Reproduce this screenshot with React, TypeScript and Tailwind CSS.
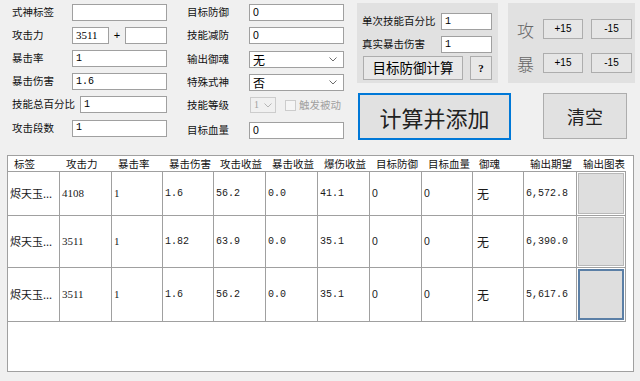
import React from "react";

const CJK = "font-['Noto_Sans_CJK_SC','Noto_Sans',sans-serif]";

function TextBox({ value = "", w, mono = false, serif = false }: { value?: string; w: string; mono?: boolean; serif?: boolean }) {
  const font = mono ? "font-['Liberation_Mono',monospace] text-[10px]" : serif ? "font-['Liberation_Serif',serif] text-[11px]" : "font-['Liberation_Sans',sans-serif] text-[10.5px]";
  return (
    <div className={`${w} h-[17px] border border-[#a0a0a0] bg-white pl-[3px] flex items-center text-black leading-none ${font}`}>
      {value}
    </div>
  );
}

function Chevron({ color = "#6d6d6d" }: { color?: string }) {
  return (
    <svg width="8" height="5" viewBox="0 0 8 5" className="shrink-0">
      <path d="M0.5 0.5 L4 4 L7.5 0.5" fill="none" stroke={color} strokeWidth="1" />
    </svg>
  );
}

function Select({ value }: { value: string }) {
  return (
    <div className="w-[95px] h-[17px] border border-[#a0a0a0] bg-white pl-[3px] pr-[6px] flex items-center justify-between">
      <span className="text-[12px] leading-none text-black">{value}</span>
      <Chevron />
    </div>
  );
}

function Label({ text, w }: { text: string; w: string }) {
  return <span className={`${w} text-[10.5px] leading-none text-[#111111] whitespace-nowrap`}>{text}</span>;
}

function SmallBtn({ text, w }: { text: string; w: string }) {
  return (
    <div className={`${w} h-[20px] border border-[#adadad] bg-[#e6e6e6] flex items-center justify-center text-[10px] leading-none text-black font-['Liberation_Sans',sans-serif]`}>
      {text}
    </div>
  );
}

const COLS = ["标签", "攻击力", "暴击率", "暴击伤害", "攻击收益", "暴击收益", "爆伤收益", "目标防御", "目标血量", "御魂", "输出期望", "输出图表"];

const ROWS = [
  { h: "h-[44px]", cells: ["烬天玉...", "4108", "1", "1.6", "56.2", "0.0", "41.1", "0", "0", "无", "6,572.8"], focus: false },
  { h: "h-[52px]", cells: ["烬天玉...", "3511", "1", "1.82", "63.9", "0.0", "35.1", "0", "0", "无", "6,390.0"], focus: false },
  { h: "h-[54px]", cells: ["烬天玉...", "3511", "1", "1.6", "56.2", "0.0", "35.1", "0", "0", "无", "5,617.6"], focus: true },
];

function cellFont(i: number) {
  if (i === 0) return "text-[11px] pl-[2px]";
  if (i === 9) return "text-[12px] pl-[4px]";
  if (i === 1 || i === 2) return "font-['Liberation_Serif',serif] text-[11px] pl-[2px]";
  if (i === 7 || i === 8) return "font-['Liberation_Sans',sans-serif] text-[10.5px] pl-[2px]";
  return "font-['Liberation_Mono',monospace] text-[10px] pl-[2px]";
}

export default function App() {
  return (
    <div className={`w-[640px] h-[381px] bg-[#f0f0f0] overflow-hidden ${CJK}`}>
      {/* top controls */}
      <div className="h-[155px] flex">
        {/* left column */}
        <div className="w-[170px] pl-[12px] pt-[4px] flex flex-col gap-[6px]">
          <div className="flex items-center h-[17px]">
            <Label text="式神标签" w="w-[60px]" />
            <TextBox w="w-[95px]" />
          </div>
          <div className="flex items-center h-[17px]">
            <Label text="攻击力" w="w-[60px]" />
            <TextBox value="3511" w="w-[37px]" serif />
            <span className="w-[16px] text-center text-[11px] font-['Liberation_Sans',sans-serif]">+</span>
            <TextBox w="w-[42px]" />
          </div>
          <div className="flex items-center h-[17px]">
            <Label text="暴击率" w="w-[60px]" />
            <TextBox value="1" w="w-[95px]" mono />
          </div>
          <div className="flex items-center h-[17px]">
            <Label text="暴击伤害" w="w-[60px]" />
            <TextBox value="1.6" w="w-[95px]" mono />
          </div>
          <div className="flex items-center h-[17px]">
            <Label text="技能总百分比" w="w-[68px]" />
            <TextBox value="1" w="w-[87px]" mono />
          </div>
          <div className="flex items-center h-[18px]">
            <Label text="攻击段数" w="w-[60px]" />
            <TextBox value="1" w="w-[95px]" mono />
          </div>
        </div>

        {/* middle column */}
        <div className="w-[187px] pl-[17px] pt-[4px] flex flex-col">
          <div className="flex items-center h-[17px]">
            <Label text="目标防御" w="w-[62px]" />
            <TextBox value="0" w="w-[95px]" />
          </div>
          <div className="flex items-center h-[17px] mt-[6px]">
            <Label text="技能减防" w="w-[62px]" />
            <TextBox value="0" w="w-[95px]" />
          </div>
          <div className="flex items-center h-[17px] mt-[7px]">
            <Label text="输出御魂" w="w-[62px]" />
            <Select value="无" />
          </div>
          <div className="flex items-center h-[17px] mt-[6px]">
            <Label text="特殊式神" w="w-[62px]" />
            <Select value="否" />
          </div>
          <div className="flex items-center h-[16px] mt-[6px]">
            <Label text="技能等级" w="w-[63px]" />
            <div className="w-[26px] h-[16px] border border-[#cccccc] bg-[#f0f0f0] pl-[3px] pr-[3px] flex items-center justify-between">
              <span className="text-[10px] leading-none text-[#a0a0a0] font-['Liberation_Serif',serif]">1</span>
              <Chevron color="#b5b5b5" />
            </div>
            <div className="ml-[9px] w-[11px] h-[11px] border border-[#cccccc] bg-[#f5f5f5]" />
            <span className="ml-[3px] text-[10.5px] leading-none text-[#a0a0a0]">触发被动</span>
          </div>
          <div className="flex items-center h-[18px] mt-[8px]">
            <Label text="目标血量" w="w-[62px]" />
            <TextBox value="0" w="w-[95px]" />
          </div>
        </div>

        {/* right area */}
        <div className="pt-[3px] flex flex-col">
          <div className="flex gap-[10px]">
            <div className="w-[141px] h-[80px] bg-[#e1e1e1] pt-[10px] pl-[5px] flex flex-col">
              <div className="flex items-center h-[17px]">
                <Label text="单次技能百分比" w="w-[79px]" />
                <TextBox value="1" w="w-[51px]" mono />
              </div>
              <div className="flex items-center h-[17px] mt-[6px]">
                <Label text="真实暴击伤害" w="w-[79px]" />
                <TextBox value="1" w="w-[51px]" mono />
              </div>
              <div className="flex mt-[3px] ml-[1px]">
                <div className="w-[100px] h-[24px] border border-[#adadad] bg-[#e8e8e8] flex items-center justify-center text-[13.5px] leading-none text-black">
                  目标防御计算
                </div>
                <div className="ml-[7px] w-[22px] h-[24px] border border-[#adadad] bg-[#e8e8e8] flex items-center justify-center text-[11px] font-bold leading-none text-black font-['Liberation_Serif',serif]">
                  ?
                </div>
              </div>
            </div>
            <div className="w-[127px] h-[80px] bg-[#e1e1e1] pt-[16px] flex flex-col gap-[14px]">
              <div className="flex items-center">
                <span className="w-[35px] text-center text-[17px] leading-none text-[#666666] font-light">攻</span>
                <SmallBtn text="+15" w="w-[40px]" />
                <div className="w-[8px]" />
                <SmallBtn text="-15" w="w-[41px]" />
              </div>
              <div className="flex items-center">
                <span className="w-[35px] text-center text-[17px] leading-none text-[#666666] font-light">暴</span>
                <SmallBtn text="+15" w="w-[40px]" />
                <div className="w-[8px]" />
                <SmallBtn text="-15" w="w-[41px]" />
              </div>
            </div>
          </div>
          <div className="flex mt-[10px]">
            <div className="ml-[1px] w-[153px] h-[47px] border-2 border-[#0078d7] bg-[#e1e1e1] flex items-center justify-center text-[22px] leading-none text-[#222222]">
              计算并添加
            </div>
            <div className="ml-[32px] w-[84px] h-[46px] border border-[#adadad] bg-[#e1e1e1] flex items-center justify-center text-[18px] leading-none text-[#222222]">
              清空
            </div>
          </div>
        </div>
      </div>

      {/* table */}
      <div className="ml-[7px] w-[627px] h-[217px] border border-[#a0a0a0] bg-white">
        <div className="grid grid-cols-[52px_52px_51px_51px_52px_52px_52px_52px_51px_51px_53px_49px] h-[16px] border-b border-[#a0a0a0] w-[618px]">
          {COLS.map((c) => (
            <div key={c} className="pl-[6px] text-[10.5px] leading-[15px] text-[#111111] whitespace-nowrap overflow-hidden">
              {c}
            </div>
          ))}
        </div>
        {ROWS.map((r, ri) => (
          <div key={ri} className={`grid grid-cols-[52px_52px_51px_51px_52px_52px_52px_52px_51px_51px_53px_49px] ${r.h} w-[618px]`}>
            {r.cells.map((c, i) => (
              <div
                key={i}
                className={`border-r border-b border-[#a0a0a0] flex items-center text-[#1a1a1a] leading-none whitespace-nowrap overflow-hidden ${cellFont(i)}`}
              >
                {c}
              </div>
            ))}
            <div className="border-r border-b border-[#a0a0a0] p-[1px]">
              <div className={`w-full h-full bg-[#dedede] ${r.focus ? "border-2 border-[#5b7fa6]" : "border border-[#b8b8b8]"}`} />
            </div>
          </div>
        ))}
      </div>
    </div>
  );
}
